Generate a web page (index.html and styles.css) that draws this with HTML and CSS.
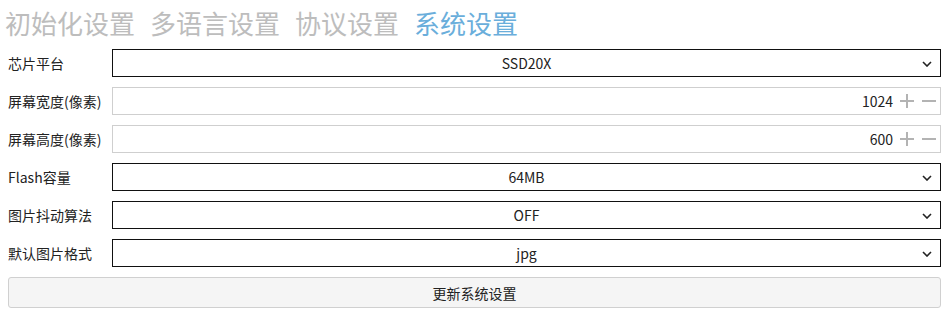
FILE: index.html
```html
<!DOCTYPE html>
<html lang="zh">
<head>
<meta charset="utf-8">
<link rel="stylesheet" href="styles.css">
</head>
<body>
<div class="page">
  <div class="tabs">
    <span class="tab">初始化设置</span>
    <span class="tab">多语言设置</span>
    <span class="tab">协议设置</span>
    <span class="tab active">系统设置</span>
  </div>
  <div class="form">
    <div class="row">
      <div class="label">芯片平台</div>
      <div class="select"><span class="val">SSD20X</span><svg class="chev" width="10" height="6" viewBox="0 0 10 6"><path d="M1 1 L5 5 L9 1" fill="none" stroke="#222" stroke-width="1.6"/></svg></div>
    </div>
    <div class="row">
      <div class="label">屏幕宽度(像素)</div>
      <div class="number"><span class="num">1024</span>
        <svg class="pm" width="16" height="16" viewBox="0 0 16 16"><path d="M1 8 H15 M8 1 V15" stroke="#b3b3b3" stroke-width="2"/></svg>
        <svg class="pm" width="16" height="16" viewBox="0 0 16 16"><path d="M1 8 H15" stroke="#b3b3b3" stroke-width="2"/></svg>
      </div>
    </div>
    <div class="row">
      <div class="label">屏幕高度(像素)</div>
      <div class="number"><span class="num">600</span>
        <svg class="pm" width="16" height="16" viewBox="0 0 16 16"><path d="M1 8 H15 M8 1 V15" stroke="#b3b3b3" stroke-width="2"/></svg>
        <svg class="pm" width="16" height="16" viewBox="0 0 16 16"><path d="M1 8 H15" stroke="#b3b3b3" stroke-width="2"/></svg>
      </div>
    </div>
    <div class="row">
      <div class="label">Flash容量</div>
      <div class="select"><span class="val">64MB</span><svg class="chev" width="10" height="6" viewBox="0 0 10 6"><path d="M1 1 L5 5 L9 1" fill="none" stroke="#222" stroke-width="1.6"/></svg></div>
    </div>
    <div class="row">
      <div class="label">图片抖动算法</div>
      <div class="select"><span class="val">OFF</span><svg class="chev" width="10" height="6" viewBox="0 0 10 6"><path d="M1 1 L5 5 L9 1" fill="none" stroke="#222" stroke-width="1.6"/></svg></div>
    </div>
    <div class="row">
      <div class="label">默认图片格式</div>
      <div class="select"><span class="val">jpg</span><svg class="chev" width="10" height="6" viewBox="0 0 10 6"><path d="M1 1 L5 5 L9 1" fill="none" stroke="#222" stroke-width="1.6"/></svg></div>
    </div>
    <div class="button">更新系统设置</div>
  </div>
</div>
</body>
</html>
```
FILE: styles.css
```css
* { box-sizing: border-box; }
html, body { margin: 0; padding: 0; background: #fff; }
body {
  font-family: "Noto Sans CJK SC", "Noto Sans", sans-serif;
  color: #222;
  width: 950px;
  height: 322px;
  overflow: hidden;
}
.page { padding: 0 9px 0 8px; }
.tabs {
  display: flex;
  gap: 15px;
  height: 49px;
  margin-left: -3px;
  align-items: flex-start;
}
.tab {
  font-size: 26px;
  line-height: 45px;
  color: #bdbdbd;
}
.tab.active { color: #6aaedb; }
.form { display: flex; flex-direction: column; gap: 10px; }
.row { display: flex; align-items: center; height: 28px; }
.label {
  width: 104px;
  flex: none;
  font-size: 14px;
  color: #222;
  white-space: nowrap;
}
.select {
  flex: 1;
  height: 28px;
  border: 1px solid #111;
  display: flex;
  align-items: center;
  justify-content: center;
  position: relative;
  font-size: 14px;
}
.chev { position: absolute; right: 8px; top: 11px; }
.number {
  flex: 1;
  height: 28px;
  border: 1px solid #cfcfcf;
  display: flex;
  align-items: center;
  justify-content: flex-end;
  padding-right: 3px;
  font-size: 14px;
  gap: 6px;
}
.num { margin-right: 0; }
.pm { flex: none; }
.button {
  height: 31px;
  border: 1px solid #d0d0d0;
  border-radius: 3px;
  background: #f5f5f5;
  display: flex;
  align-items: center;
  justify-content: center;
  font-size: 14px;
  color: #222;
}
```
